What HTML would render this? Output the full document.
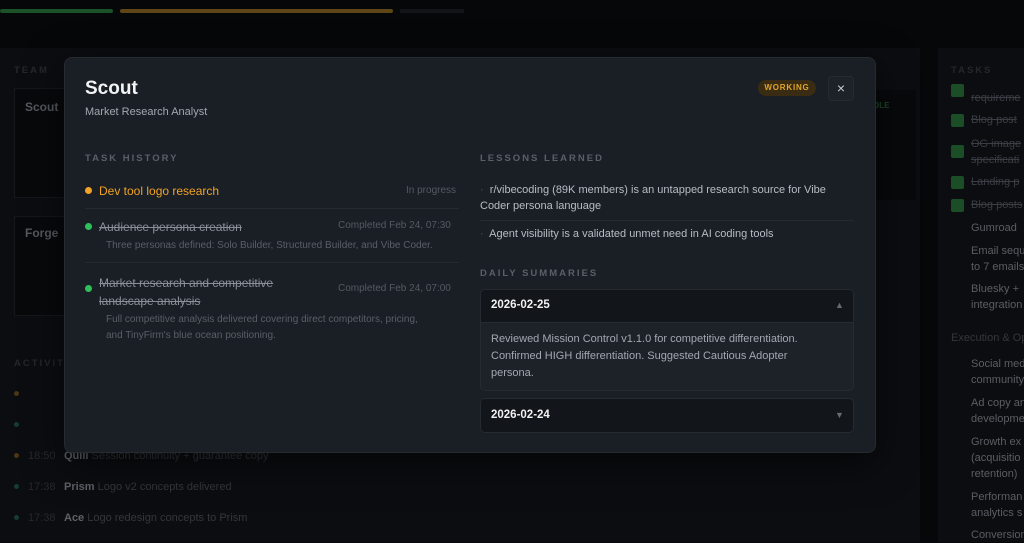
<!DOCTYPE html>
<html><head><meta charset="utf-8"><style>
*{margin:0;padding:0;box-sizing:border-box}
body{width:1024px;height:542px;overflow:hidden;background:#060709;font-family:"Liberation Sans",sans-serif;position:relative;color:#ccc}
.a{position:absolute;white-space:nowrap}
.lbl{font-size:9.5px;letter-spacing:2px;font-weight:bold;color:#5a6068}
.s{text-decoration:line-through}
</style></head><body>
<!-- background -->
<div class="a" style="left:0;top:9px;width:113px;height:4px;background:#1b5228;border-radius:2px"></div>
<div class="a" style="left:120px;top:9px;width:273px;height:4px;background:#5e4616;border-radius:2px"></div>
<div class="a" style="left:400px;top:9px;width:64px;height:4px;background:#121417"></div>
<div class="a" style="left:0;top:48px;width:920px;height:494px;background:#0b0d10"></div>
<div class="a" style="left:938px;top:48px;width:86px;height:494px;background:#0b0d10"></div>
<div class="a lbl" style="left:14px;top:65px;color:#24272c">TEAM</div>
<div class="a" style="left:14px;top:88px;width:60px;height:110px;background:#08090b;border:1px solid #14171b"></div>
<div class="a" style="left:25px;top:100px;font-size:12px;color:#55595f;font-weight:bold">Scout</div>
<div class="a" style="left:14px;top:216px;width:60px;height:100px;background:#08090b;border:1px solid #14171b"></div>
<div class="a" style="left:25px;top:226px;font-size:12px;color:#55595f;font-weight:bold">Forge</div>
<div class="a" style="left:860px;top:90px;width:56px;height:110px;background:#08090b"></div>
<div class="a" style="left:873px;top:101px;font-size:8px;color:#1d4a26;font-weight:bold">OLE</div>
<div class="a lbl" style="left:14px;top:358px;color:#24272c">ACTIVITY</div>
<div class="a" style="left:14px;top:391px;width:5px;height:5px;border-radius:50%;background:#4a3716"></div>
<div class="a" style="left:14px;top:422px;width:5px;height:5px;border-radius:50%;background:#163d30"></div>
<div class="a" style="left:14px;top:453px;width:5px;height:5px;border-radius:50%;background:#4a3716"></div>
<div class="a" style="left:14px;top:484px;width:5px;height:5px;border-radius:50%;background:#163d30"></div>
<div class="a" style="left:14px;top:515px;width:5px;height:5px;border-radius:50%;background:#163d30"></div>
<div class="a" style="left:28px;top:450px;font-size:11px;color:#25282d">18:50</div>
<div class="a" style="left:28px;top:481px;font-size:11px;color:#25282d">17:38</div>
<div class="a" style="left:28px;top:512px;font-size:11px;color:#25282d">17:38</div>
<div class="a" style="left:64px;top:450px;font-size:11px;color:#33373c"><b style="color:#5e6268">Quill</b> Session continuity + guarantee copy</div>
<div class="a" style="left:64px;top:481px;font-size:11px;color:#33373c"><b style="color:#5e6268">Prism</b> Logo v2 concepts delivered</div>
<div class="a" style="left:64px;top:512px;font-size:11px;color:#33373c"><b style="color:#5e6268">Ace</b> Logo redesign concepts to Prism</div>
<div class="a lbl" style="left:951px;top:65px;color:#24272c">TASKS</div>
<div style="position:absolute;left:951px;top:84px;font-size:11px;color:#3a3e44;line-height:16px">
<div class="a" style="top:0;left:0;width:13px;height:13px;background:#1b4d26;border-radius:2px"></div><div class="a s" style="left:20px;top:6px">requireme</div>
<div class="a" style="top:30px;left:0;width:13px;height:13px;background:#1b4d26;border-radius:2px"></div><div class="a s" style="left:20px;top:28px">Blog post</div>
<div class="a" style="top:61px;left:0;width:13px;height:13px;background:#1b4d26;border-radius:2px"></div><div class="a s" style="left:20px;top:52px">OG image<br>specificati</div>
<div class="a" style="top:92px;left:0;width:13px;height:13px;background:#1b4d26;border-radius:2px"></div><div class="a s" style="left:20px;top:90px">Landing p</div>
<div class="a" style="top:115px;left:0;width:13px;height:13px;background:#1b4d26;border-radius:2px"></div><div class="a s" style="left:20px;top:113px">Blog posts</div>
<div class="a" style="left:20px;top:136px;color:#5a5e64">Gumroad</div>
<div class="a" style="left:20px;top:159px;color:#5a5e64">Email sequ<br>to 7 emails</div>
<div class="a" style="left:20px;top:197px;color:#5a5e64">Bluesky +<br>integration</div>
<div class="a" style="left:0;top:246px;color:#33373c">Execution &amp; Op</div>
<div class="a" style="left:20px;top:272px;color:#5a5e64">Social med<br>community</div>
<div class="a" style="left:20px;top:311px;color:#5a5e64">Ad copy an<br>developme</div>
<div class="a" style="left:20px;top:350px;color:#5a5e64">Growth ex<br>(acquisitio<br>retention)</div>
<div class="a" style="left:20px;top:405px;color:#5a5e64">Performan<br>analytics s</div>
<div class="a" style="left:20px;top:443px;color:#5a5e64">Conversion</div>
</div>

<!-- modal -->
<div class="a" style="left:64px;top:57px;width:812px;height:396px;background:#1a1e25;border:1px solid #262a31;border-radius:8px;box-shadow:0 10px 40px rgba(0,0,0,.6)"></div>
<div class="a" style="left:85px;top:78px;font-size:19px;font-weight:bold;color:#f2f3f5">Scout</div>
<div class="a" style="left:85px;top:106px;font-size:11px;color:#a3a8b0">Market Research Analyst</div>
<div class="a" style="left:758px;top:80px;width:58px;height:16px;border-radius:8px;background:#3a2c12;color:#e0a42a;font-size:8px;font-weight:bold;letter-spacing:.8px;text-align:center;line-height:16px">WORKING</div>
<div class="a" style="left:828px;top:76px;width:26px;height:25px;border:1px solid #262a31;border-radius:4px;background:#1d2128;color:#c8ccd2;font-size:14px;text-align:center;line-height:23px">×</div>

<div class="a lbl" style="left:85px;top:153px">TASK HISTORY</div>
<div class="a" style="left:85px;top:187px;width:7px;height:7px;border-radius:50%;background:#f0a325"></div>
<div class="a" style="left:99px;top:184px;font-size:12px;color:#f0a325">Dev tool logo research</div>
<div class="a" style="left:406px;top:185px;font-size:10px;color:#555a62">In progress</div>
<div class="a" style="left:85px;top:208px;width:374px;height:1px;background:#252930"></div>
<div class="a" style="left:85px;top:223px;width:7px;height:7px;border-radius:50%;background:#2fbf5a"></div>
<div class="a s" style="left:99px;top:220px;font-size:12px;color:#8a8f97">Audience persona creation</div>
<div class="a" style="left:338px;top:220px;font-size:10px;color:#555a62">Completed Feb 24, 07:30</div>
<div class="a" style="left:106px;top:240px;font-size:10px;color:#5a5f67">Three personas defined: Solo Builder, Structured Builder, and Vibe Coder.</div>
<div class="a" style="left:85px;top:262px;width:374px;height:1px;background:#252930"></div>
<div class="a" style="left:85px;top:285px;width:7px;height:7px;border-radius:50%;background:#2fbf5a"></div>
<div class="a s" style="left:99px;top:274px;font-size:12px;color:#8a8f97;line-height:18px">Market research and competitive<br>landscape analysis</div>
<div class="a" style="left:338px;top:283px;font-size:10px;color:#555a62">Completed Feb 24, 07:00</div>
<div class="a" style="left:106px;top:312px;font-size:10px;color:#5a5f67;line-height:15.5px">Full competitive analysis delivered covering direct competitors, pricing,<br>and TinyFirm's blue ocean positioning.</div>

<div class="a lbl" style="left:480px;top:153px">LESSONS LEARNED</div>
<div class="a" style="left:480px;top:182px;font-size:11px;color:#b8bdc4;line-height:16px"><span style="color:#555">·</span>&nbsp; r/vibecoding (89K members) is an untapped research source for Vibe<br>Coder persona language</div>
<div class="a" style="left:480px;top:220px;width:374px;height:1px;background:#252930"></div>
<div class="a" style="left:480px;top:228px;font-size:11px;color:#b8bdc4"><span style="color:#555">·</span>&nbsp; Agent visibility is a validated unmet need in AI coding tools</div>
<div class="a lbl" style="left:480px;top:268px">DAILY SUMMARIES</div>
<div class="a" style="left:480px;top:289px;width:374px;height:102px;border:1px solid #262a31;border-radius:5px;background:#1d2128"></div>
<div class="a" style="left:481px;top:290px;width:372px;height:33px;background:#121519;border-radius:4px 4px 0 0;border-bottom:1px solid #262a31"></div>
<div class="a" style="left:491px;top:299px;font-size:11.5px;font-weight:bold;color:#f0f1f3">2026-02-25</div>
<div class="a" style="left:835px;top:300px;font-size:9px;color:#666b72">▲</div>
<div class="a" style="left:491px;top:331px;font-size:11px;color:#a3a8b0;line-height:17px">Reviewed Mission Control v1.1.0 for competitive differentiation.<br>Confirmed HIGH differentiation. Suggested Cautious Adopter<br>persona.</div>
<div class="a" style="left:480px;top:398px;width:374px;height:35px;border:1px solid #262a31;border-radius:5px;background:#121519"></div>
<div class="a" style="left:491px;top:409px;font-size:11.5px;font-weight:bold;color:#f0f1f3">2026-02-24</div>
<div class="a" style="left:835px;top:410px;font-size:9px;color:#666b72">▼</div>
</body></html>
